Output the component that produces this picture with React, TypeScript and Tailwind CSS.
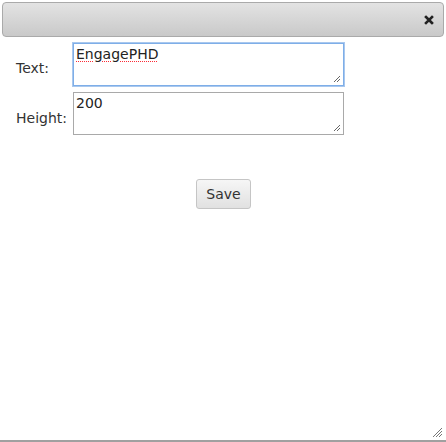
import React, { useState } from 'react';

const CloseIcon = () => (
  <svg width="10" height="10" viewBox="0 0 10 10">
    <path d="M2 2 L8 8 M8 2 L2 8" stroke="#222" strokeWidth="2.6" strokeLinecap="square" />
  </svg>
);

const Grip = () => (
  <svg width="10" height="10" viewBox="0 0 10 10" className="absolute right-[2px] bottom-[2px]">
    <path d="M9 3 L3 9 M9 6 L6 9" stroke="#666" strokeWidth="1" />
  </svg>
);

export default function App() {
  const [text, setText] = useState('EngagePHD');
  const [height, setHeight] = useState('200');

  return (
    <div className="relative w-[446px] h-[442px] bg-white overflow-hidden font-['DejaVu_Sans',Verdana,sans-serif] text-[14px] text-[#333]">
      <div className="mx-[2px] mt-[2px] h-[35px] rounded-[4px] border border-[#aaa] bg-gradient-to-b from-[#e3e3e3] to-[#c9c9c9] flex items-center justify-end pr-[9px] pt-[1px]">
        <CloseIcon />
      </div>

      <div className="flex flex-col gap-[6px] mt-[6px]">
        <div className="flex items-center">
          <label className="w-[73px] pl-[16px] pt-[8px]">Text:</label>
          <div className="relative w-[271px] h-[43px] border border-[#7eaee8] shadow-[0_0_0_1px_#a9c8ee]">
            <textarea
              value={text}
              onChange={e => setText(e.target.value)}
              className="w-full h-full resize-none outline-none px-[2px] pt-[2px] leading-[17px] text-[#222] underline decoration-dotted decoration-red-500 decoration-1 underline-offset-2"
            />
            <Grip />
          </div>
        </div>
        <div className="flex items-center">
          <label className="w-[73px] pl-[16px] pt-[10px]">Height:</label>
          <div className="relative w-[271px] h-[43px] border border-[#a9a9a9]">
            <textarea
              value={height}
              onChange={e => setHeight(e.target.value)}
              className="w-full h-full resize-none outline-none px-[2px] pt-[2px] leading-[17px] text-[#222]"
            />
            <Grip />
          </div>
        </div>
      </div>

      <div className="flex justify-center mt-[44px]">
        <button className="h-[30px] px-[9px] ml-[1px] rounded-[3px] border border-[#c5c5c5] bg-gradient-to-b from-[#f6f6f6] to-[#e1e1e1] text-[#333] text-[14px]">
          Save
        </button>
      </div>

      <div className="absolute left-0 right-0 bottom-0 h-[2px] bg-[#a0a0a0]" />
      <svg width="12" height="12" viewBox="0 0 12 12" className="absolute right-[3px] bottom-[4px]">
        <path d="M11 2 L2 11 M11 5 L5 11 M11 8 L8 11" stroke="#777" strokeWidth="1" />
      </svg>
    </div>
  );
}
